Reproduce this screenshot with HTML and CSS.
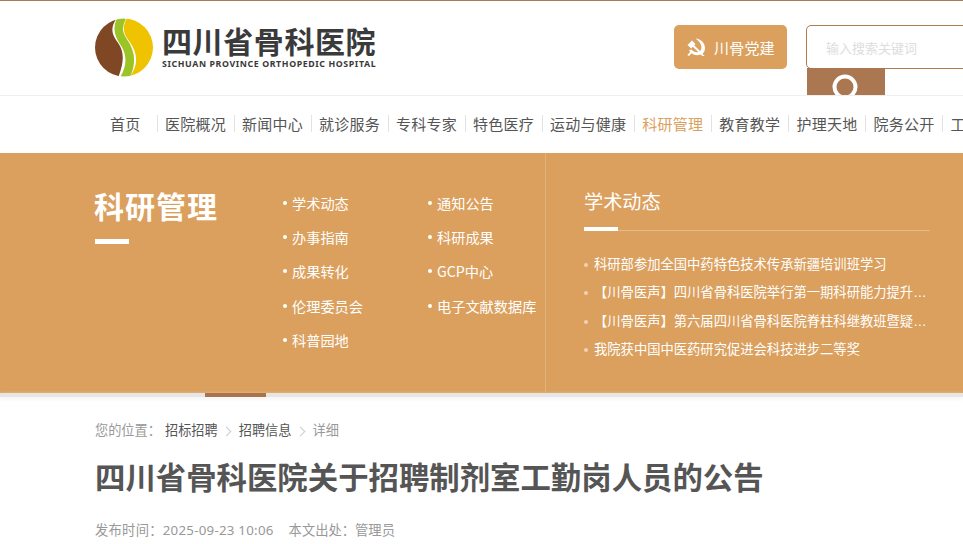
FILE: index.html
```html
<!DOCTYPE html>
<html lang="zh-CN">
<head>
<meta charset="utf-8">
<title>四川省骨科医院</title>
<link rel="stylesheet" href="styles.css">
</head>
<body>
<header class="header">
  <a class="logo">
    <svg class="logo-mark" viewBox="0 0 60 60" width="60" height="60">
      <defs><clipPath id="disc"><circle cx="30" cy="29.5" r="29"/></clipPath></defs>
      <g clip-path="url(#disc)">
        <path fill="#7f4724" d="M23 0C17 8 17 15 22 22C29 31 32 40 24 60L0 60L0 0Z"/>
        <path fill="#efc300" d="M33 0C28 9 29 15 35 23C44 35 45 47 35 60L60 60L60 0Z"/>
        <path fill="none" stroke="#9cc426" stroke-width="8.5" d="M28 -1C23 9 24 15 29 23C37 34 39 46 30 61"/>
      </g>
    </svg>
    <span class="logo-text">
      <span class="logo-cn">四川省骨科医院</span>
      <span class="logo-en">SICHUAN PROVINCE ORTHOPEDIC HOSPITAL</span>
    </span>
  </a>
  <a class="party">
    <svg class="party-icon" viewBox="0 0 18 18" width="18" height="18">
      <path fill="#fff" d="M8.500 .5C14 1 18 5 18 10C18 12.800 16.800 14.800 15.300 16L17.800 17.800L15.600 18L13.300 16.500C10.500 17.700 7 17.200 4.600 15.300L2 18L.3 17L3.200 14C2.700 13.400 2.300 12.700 2 12L4.200 11.500C6.500 14 10 15 12.800 13.400C15.800 10.500 15 5 8.500 .5Z"/>
      <path fill="#fff" d="M.5 7L5 2.500L8.500 6L7.200 7.300L14 14L12.500 15L5.700 8.800L4.200 10.500Z"/>
    </svg>
    <span class="party-text">川骨党建</span>
  </a>
  <div class="search">
    <input class="search-input" type="text" placeholder="输入搜索关键词">
    <button class="search-btn" type="button" aria-label="搜索">
      <svg viewBox="0 0 28 28" width="28" height="28"><circle cx="14" cy="14" r="10.500" fill="none" stroke="#fff" stroke-width="4"/></svg>
    </button>
  </div>
</header>

<nav class="nav">
  <a class="nav-item nav-home">首页</a>
  <a class="nav-item">医院概况</a>
  <a class="nav-item">新闻中心</a>
  <a class="nav-item">就诊服务</a>
  <a class="nav-item">专科专家</a>
  <a class="nav-item">特色医疗</a>
  <a class="nav-item">运动与健康</a>
  <a class="nav-item is-active">科研管理</a>
  <a class="nav-item">教育教学</a>
  <a class="nav-item">护理天地</a>
  <a class="nav-item">院务公开</a>
  <a class="nav-item">工会之家</a>
</nav>

<section class="band">
  <div class="band-left">
    <div class="band-title-box">
      <h2 class="band-title">科研管理</h2>
      <div class="band-rule"></div>
    </div>
    <ul class="sub-links">
      <li>学术动态</li><li>通知公告</li>
      <li>办事指南</li><li>科研成果</li>
      <li>成果转化</li><li>GCP中心</li>
      <li>伦理委员会</li><li>电子文献数据库</li>
      <li>科普园地</li>
    </ul>
  </div>
  <div class="band-right">
    <h3 class="news-title">学术动态</h3>
    <ul class="news">
      <li>科研部参加全国中药特色技术传承新疆培训班学习</li>
      <li>【川骨医声】四川省骨科医院举行第一期科研能力提升培训班</li>
      <li>【川骨医声】第六届四川省骨科医院脊柱科继教班暨疑难病例研讨会</li>
      <li>我院获中国中医药研究促进会科技进步二等奖</li>
    </ul>
  </div>
</section>
<div class="band-bar"><span class="band-bar-mark"></span></div>

<main class="article">
  <div class="crumbs">
    <span class="crumb-label">您的位置：</span>
    <a class="crumb-link">招标招聘</a>
    <i class="chev"></i>
    <a class="crumb-link">招聘信息</a>
    <i class="chev"></i>
    <span class="crumb-current">详细</span>
  </div>
  <h1 class="article-title">四川省骨科医院关于招聘制剂室工勤岗人员的公告</h1>
  <div class="meta">
    <span class="meta-date">发布时间：2025-09-23 10:06</span>
    <span>本文出处：管理员</span>
  </div>
</main>
</body>
</html>
```
FILE: styles.css
```css
* { box-sizing: border-box; }
html, body { margin: 0; height: 544px; overflow: hidden; }
body {
  background: #fff;
  color: #555;
  font-family: "Noto Sans CJK SC", "Liberation Sans", sans-serif;
}
ul { margin: 0; padding: 0; list-style: none; }
h1, h2, h3 { margin: 0; }

.header {
  display: flex;
  height: 96px;
  padding-left: 95px;
  border-top: 1px solid #ae7a4f;
  border-bottom: 1px solid #eee;
  overflow: hidden;
}
.logo { display: flex; align-items: flex-start; width: 579px; padding-top: 17px; flex: none; }
.logo-mark { margin-left: -1px; flex: none; }
.logo-text { display: flex; flex-direction: column; margin-left: 8px; }
.logo-cn {
  font-size: 30px;
  line-height: 30px;
  margin-top: 7px;
  font-weight: 700;
  letter-spacing: .6px;
  color: #3a3a3a;
  white-space: nowrap;
}
.logo-en {
  font-family: "Noto Sans", sans-serif;
  font-size: 8.800px;
  line-height: 11px;
  margin-top: 4px;
  font-weight: 700;
  letter-spacing: .6px;
  color: #3a3a3a;
  white-space: nowrap;
}
.party {
  display: flex;
  align-items: center;
  flex: none;
  width: 113px;
  height: 44px;
  margin-top: 24px;
  padding-left: 13px;
  border-radius: 5px;
  background: #dba05e;
  color: #fff;
  font-size: 15px;
}
.party-icon { margin-right: 9px; flex: none; }
.party-text { letter-spacing: .2px; }
.search { flex: none; width: 300px; margin: 24px 0 0 19px; }
.search-input {
  display: block;
  width: 100%;
  height: 44px;
  padding: 0 19px;
  border: 1px solid #ae7a4f;
  border-radius: 5px 0 0 5px;
  outline: none;
  background: #fff;
  font: 13px "Noto Sans CJK SC", sans-serif;
}
.search-input::placeholder { color: #ddd; }
.search-btn {
  display: flex;
  justify-content: center;
  align-items: flex-start;
  width: 78px;
  height: 50px;
  margin: -1px 0 0 1px;
  padding: 5px 3px 0 0;
  border: 0;
  background: #ab7750;
}

.nav {
  display: flex;
  height: 57px;
  padding: 19px 0 0 95px;
  overflow: hidden;
  font-size: 15px;
  line-height: 17px;
  letter-spacing: .25px;
  white-space: nowrap;
}
.nav-item {
  flex: none;
  height: 17px;
  padding: 0 8px 0 7px;
  border-left: 1px solid #e2e2e2;
  color: #555;
}
.nav-home { width: 62px; padding: 0 0 0 15px; border-left: 0; }
.is-active { color: #dba05e; }

.band { display: flex; height: 240px; background: #dba05e; color: #fff; }
.band-left {
  display: flex;
  flex: none;
  width: 451px;
  margin-left: 95px;
  border-right: 1px solid #e3b27b;
}
.band-title-box { flex: none; width: 188px; padding-top: 30px; }
.band-title { margin-left: -1px; font-size: 30px; line-height: 44px; letter-spacing: 1px; font-weight: 700; }
.band-rule { width: 34px; height: 5px; margin-top: 12px; background: #fff; }
.sub-links {
  display: grid;
  grid-template-columns: 145px 115px;
  grid-auto-rows: 34.200px;
  padding-top: 33px;
  font-size: 14.200px;
  line-height: 34px;
}
.sub-links li { display: flex; align-items: center; white-space: nowrap; }
.sub-links li::before {
  content: "";
  width: 4px;
  height: 4px;
  margin-right: 5px;
  border-radius: 50%;
  background: #fff;
  flex: none;
}
.band-right { flex: none; width: 384px; padding: 33px 0 0 38px; }
.news-title {
  position: relative;
  height: 45px;
  font-size: 19.200px;
  line-height: 30px;
  font-weight: 400;
  border-bottom: 1px solid #e5b98b;
}
.news-title::after {
  content: "";
  position: absolute;
  left: 0;
  bottom: -1px;
  width: 34px;
  height: 4px;
  background: #fff;
}
.news {
  width: 346px;
  padding-top: 20px;
  font-family: "Liberation Sans", "Noto Sans CJK SC", sans-serif;
  font-size: 13.300px;
  line-height: 28.400px;
}
.news li {
  position: relative;
  padding-left: 10px;
  padding-right: 3px;
  white-space: nowrap;
  overflow: hidden;
  text-overflow: ellipsis;
}
.news li::before {
  content: "";
  position: absolute;
  left: 0;
  top: 12px;
  width: 4px;
  height: 4px;
  border-radius: 50%;
  background: #f0d3b2;
}

.band-bar { display: flex; height: 4px; padding-left: 205px; background: #e6e6e6; box-shadow: 0 2px 4px #f3f3f3; }
.band-bar-mark { width: 61px; height: 4px; background: #a9744c; }

.article { padding: 22px 0 0 95px; }
.crumbs { display: flex; align-items: center; height: 20px; font-size: 13.200px; white-space: nowrap; }
.crumb-label, .crumb-current { color: #999; }
.crumb-label { width: 70px; }
.crumb-link { color: #555; }
.chev {
  width: 7px;
  height: 7px;
  margin: 0 8.500px 0 5.500px;
  border-top: 1px solid #ccc;
  border-right: 1px solid #ccc;
  transform: translateY(2px) rotate(45deg);
}
.article-title {
  margin-top: 15px;
  font-size: 30.400px;
  line-height: 44px;
  font-weight: 700;
  color: #555;
  white-space: nowrap;
}
.meta {
  display: flex;
  gap: 15px;
  margin-top: 22px;
  font-family: "Noto Sans", "Noto Sans CJK SC", sans-serif;
  font-size: 13.300px;
  line-height: 20px;
  color: #999;
}
.meta-date { letter-spacing: .25px; }
```
